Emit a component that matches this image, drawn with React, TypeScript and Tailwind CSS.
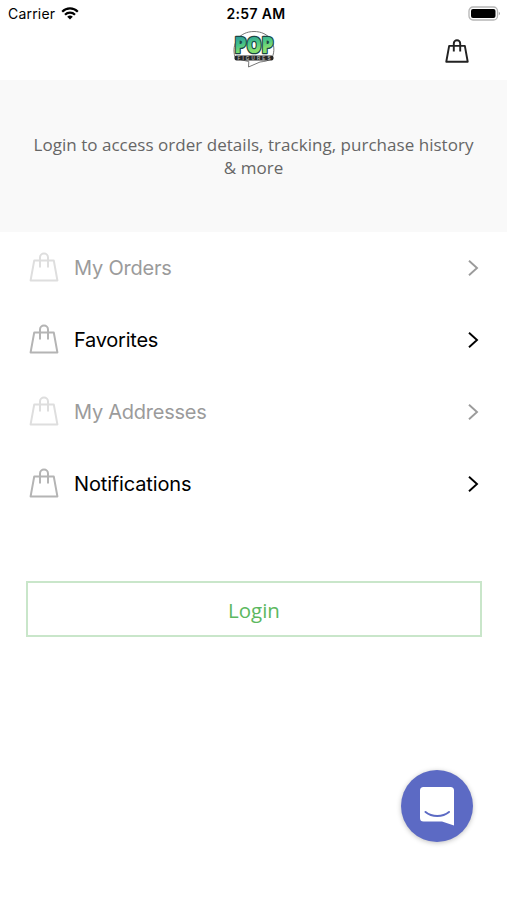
import clsx from 'clsx';

type MenuItem = {
  label: string;
  disabled?: boolean;
  textClass: string;
};

const MENU_ITEMS: MenuItem[] = [
  { label: 'My Orders', disabled: true, textClass: 'tracking-[-0.2px]' },
  { label: 'Favorites', textClass: 'tracking-[-0.25px]' },
  { label: 'My Addresses', disabled: true, textClass: 'tracking-[-0.25px]' },
  { label: 'Notifications', textClass: 'tracking-[-0.15px]' },
];

function BagIcon({ className, strokeWidth = 2 }: { className?: string; strokeWidth?: number }) {
  return (
    <svg viewBox="0 0 30 30" fill="none" stroke="currentColor" strokeWidth={strokeWidth} strokeLinejoin="round" className={className}>
      <path d="M5.2 8.6h19.6L28.4 28.4H1.6z" />
      <path d="M11 15.5V5.6a4 4 0 0 1 8 0v9.9" />
    </svg>
  );
}

function ChevronIcon({ className }: { className?: string }) {
  return (
    <svg viewBox="0 0 12 18" fill="none" stroke="currentColor" strokeWidth="1.9" className={className}>
      <path d="M2 1.8l8 7.2-8 7.2" />
    </svg>
  );
}

function WifiIcon() {
  return (
    <svg viewBox="0 0 18 13" className="ml-1.5 -mt-0.5 h-[13px] w-[18px]" fill="none" stroke="#000" strokeWidth="2.2">
      <path d="M1.2 4.7a11 11 0 0 1 15.6 0" />
      <path d="M4 7.7a7 7 0 0 1 10 0" />
      <path d="M9 12.6L6.2 9.8a4 4 0 0 1 5.6 0z" fill="#000" stroke="none" />
    </svg>
  );
}

function BatteryIcon() {
  return (
    <svg viewBox="0 0 34 16" className="h-4 w-[34px]">
      <rect x="1" y="1" width="28.5" height="13" rx="4" fill="#fff" stroke="#b5b5b5" strokeWidth="1.3" />
      <rect x="3" y="3" width="24.5" height="9" rx="2" fill="#000" />
      <path d="M30.8 5.8c1.5.5 1.5 3 0 3.5z" fill="#a0a0a0" />
    </svg>
  );
}

function Logo() {
  return (
    <svg viewBox="0 0 44 38" className="h-[38px] w-11 overflow-visible">
      <defs>
        <linearGradient id="pop" x1="0" y1="0" x2="0.25" y2="1">
          <stop offset="0.3" stopColor="#2f9f98" />
          <stop offset="0.55" stopColor="#49c487" />
          <stop offset="0.8" stopColor="#84de70" />
        </linearGradient>
      </defs>
      <path d="M3 27C-1 14 7 1.5 22 1.5S46 14 40 28c-3 3-8 3.500-12 4L16.5 37l.3-5.500C12 30.500 7 29.500 3 27z" fill="#fff" stroke="#777" strokeWidth="1" />
      <text
        x="22"
        y="22.5"
        textAnchor="middle"
        fontSize="22"
        fontWeight="800"
        fontFamily="'Open Sans', 'Noto Sans', sans-serif"
        textLength="39"
        lengthAdjust="spacingAndGlyphs"
        fill="url(#pop)"
        stroke="#1c4643"
        strokeWidth="2.6"
        strokeLinejoin="round"
        paintOrder="stroke"
      >
        POP
      </text>
      <rect x="2.5" y="25.5" width="39" height="5" rx="2" fill="#262626" />
      <text x="22" y="29.6" textAnchor="middle" fontSize="4.5" fontWeight="700" fontFamily="'Liberation Sans', sans-serif" textLength="33" fill="#b4b4b4">FIGURES</text>
    </svg>
  );
}

function StatusBar() {
  return (
    <div className="grid h-7 grid-cols-3 items-center pl-2 pr-[5px] text-black">
      <div className="flex items-center text-[14px] tracking-[0.2px]">
        <span className="-mt-0.5">Carrier</span>
        <WifiIcon />
      </div>
      <div className="-mt-0.5 pl-0.5 text-center text-[14px] font-semibold tracking-[0.35px]">2:57 AM</div>
      <div className="flex justify-end">
        <BatteryIcon />
      </div>
    </div>
  );
}

function MenuRow({ item }: { item: MenuItem }) {
  return (
    <li className={clsx('flex h-[72px] items-center pl-[29px] pr-7', item.disabled ? 'text-[#9b9b9b]' : 'text-black')}>
      <BagIcon className={clsx('mb-0.5 size-[30px]', item.disabled ? 'text-[#dedede]' : 'text-[#b4b4b4]')} />
      <span className={clsx('ml-[15px] flex-1 text-[20px]', item.textClass)}>{item.label}</span>
      <ChevronIcon className="h-[18px] w-3" />
    </li>
  );
}

function ChatButton() {
  return (
    <button className="absolute left-[401px] top-[770px] flex size-[72px] items-center justify-center rounded-full bg-[#5c6ac4] shadow-[0_1px_5px_rgba(0,0,0,0.25)]">
      <svg viewBox="0 0 36 40" className="h-10 w-9">
        <path d="M4.5 1h27A3.5 3.5 0 0 1 35 4.5v35l-12-4H4.5A3.5 3.5 0 0 1 1 32V4.5A3.5 3.5 0 0 1 4.5 1z" fill="#fff" />
        <path d="M6.5 26c6.500 5.300 17 5.300 23.500 0" fill="none" stroke="#5c6ac4" strokeWidth="2" strokeLinecap="round" />
      </svg>
    </button>
  );
}

export default function App() {
  return (
    <div className="relative h-[900px] w-[507px] overflow-hidden bg-white font-['Inter',sans-serif]">
      <StatusBar />
      <header className="grid h-[52px] grid-cols-3 items-start">
        <div className="col-start-2 flex justify-center pt-0.5">
          <Logo />
        </div>
        <div className="flex justify-end pr-[38px] pt-[11px]">
          <BagIcon className="size-6 text-[#222]" strokeWidth={2.4} />
        </div>
      </header>

      <section className="h-[152px] bg-[#f9f9f9] px-6 pt-[53px] text-center font-['Open_Sans',sans-serif] text-[17px] leading-[23px] tracking-[0.03px] text-[#666]">
        Login to access order details, tracking, purchase history
        <br />
        &amp; more
      </section>

      <ul>
        {MENU_ITEMS.map((item) => (
          <MenuRow key={item.label} item={item} />
        ))}
      </ul>

      <button className="ml-[26px] mt-[61px] flex h-14 w-[456px] items-center justify-center border-2 border-[#c9e6ca] pt-0.5 font-['Open_Sans',sans-serif] text-[20.5px] text-[#5cb860]">
        Login
      </button>

      <ChatButton />
    </div>
  );
}
